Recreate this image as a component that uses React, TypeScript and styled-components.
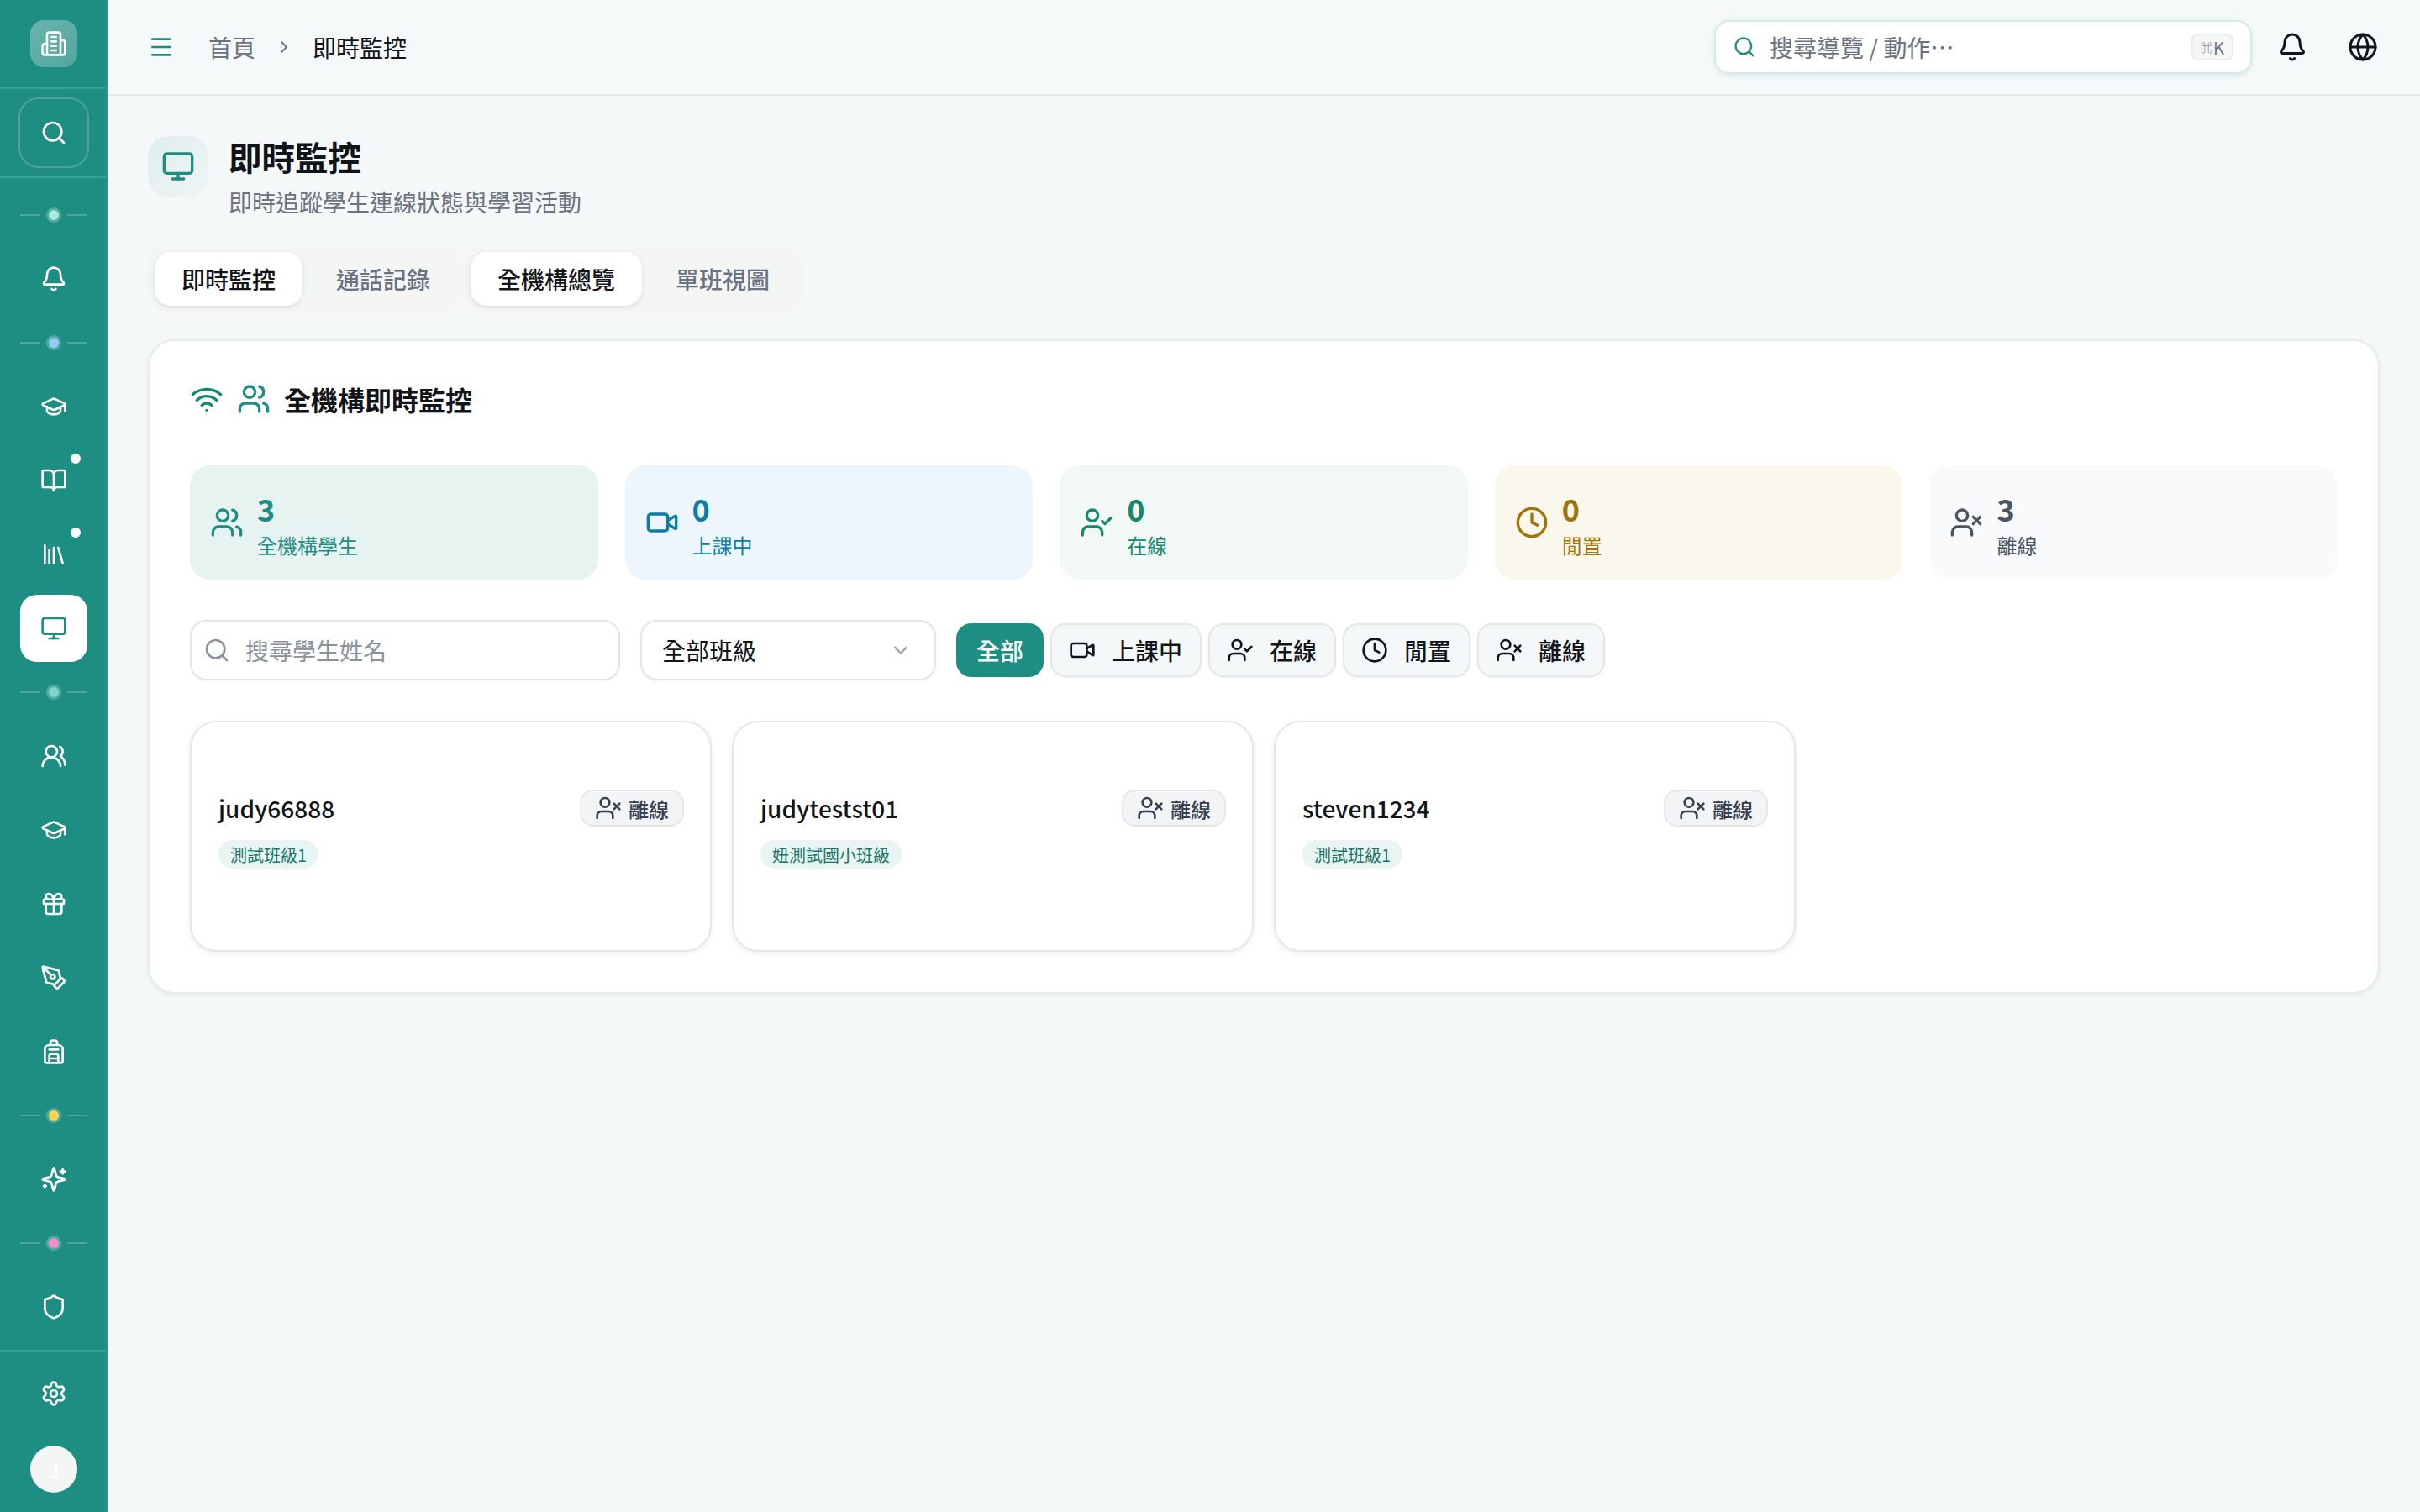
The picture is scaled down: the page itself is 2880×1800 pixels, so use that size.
import React from "react";
import styled, { createGlobalStyle } from "styled-components";
import {
  Backpack, Bell, BookOpen, ChevronDown, ChevronRight, Clock, Gift, Globe, GraduationCap,
  Library, Menu, Monitor, PenTool, Search, Settings, Shield, UserCheck, UserX, Users, UsersRound,
  Video, Wifi,
} from "lucide-react";

const GlobalStyle = createGlobalStyle`
  html, body { margin: 0; padding: 0; }
  body {
    background: #f5f8f8;
    color: #111418;
    font-family: "Noto Sans CJK TC", "Noto Sans", sans-serif;
  }
  * { box-sizing: border-box; }
`;

const Shell = styled.div`
  display: flex;
  min-height: 1800px;
`;

const Sidebar = styled.aside`
  position: relative;
  width: 128px;
  height: 1800px;
  flex: none;
  display: flex;
  flex-direction: column;
  background: #1f8e82;
  color: #fff;
  &::after {
    content: "";
    position: absolute;
    top: 0;
    right: 0;
    bottom: 0;
    width: 2px;
    background: #2b9489;
  }
`;

const LogoSection = styled.div`
  height: 106px;
  padding-top: 24px;
  display: flex;
  justify-content: center;
  align-items: flex-start;
  border-bottom: 2px solid rgba(255, 255, 255, 0.14);
`;

const LogoBox = styled.div`
  width: 56px;
  height: 56px;
  border-radius: 16px;
  display: flex;
  align-items: center;
  justify-content: center;
  background: linear-gradient(135deg, rgba(255, 255, 255, 0.34), rgba(255, 255, 255, 0.22));
`;

const SearchSection = styled.div`
  height: 106px;
  display: flex;
  align-items: center;
  justify-content: center;
  border-bottom: 2px solid rgba(255, 255, 255, 0.14);
`;

const SearchButton = styled.div`
  width: 84px;
  height: 84px;
  border-radius: 24px;
  border: 2px solid rgba(255, 255, 255, 0.2);
  display: flex;
  align-items: center;
  justify-content: center;
`;

const Nav = styled.nav`
  flex: 1;
  padding: 16px 24px 0;
  display: flex;
  flex-direction: column;
  gap: 8px;
`;

const NavItem = styled.div<{ $active?: boolean }>`
  position: relative;
  width: 80px;
  height: 80px;
  flex: none;
  border-radius: 20px;
  display: flex;
  align-items: center;
  justify-content: center;
  background: ${(p) => (p.$active ? "#fff" : "transparent")};
  color: ${(p) => (p.$active ? "#1f8e82" : "#fff")};
`;

const NavBadge = styled.span`
  position: absolute;
  top: 8px;
  right: 8px;
  width: 12px;
  height: 12px;
  border-radius: 50%;
  background: #fff;
`;

const Separator = styled.div`
  height: 56px;
  width: 80px;
  flex: none;
  display: flex;
  align-items: center;
  justify-content: center;
  gap: 8px;
`;

const SeparatorLine = styled.span`
  width: 24px;
  height: 2px;
  background: rgba(255, 255, 255, 0.22);
`;

const SeparatorDot = styled.span<{ $color: string }>`
  width: 12px;
  height: 12px;
  margin: 0 2px;
  border-radius: 50%;
  background: ${(p) => p.$color};
  box-shadow: 0 0 0 3px rgba(255, 255, 255, 0.24);
`;

const SidebarFooter = styled.div`
  height: 193px;
  border-top: 2px solid rgba(255, 255, 255, 0.14);
  padding-top: 10px;
  display: flex;
  flex-direction: column;
  align-items: center;
`;

const FooterButton = styled.div`
  width: 80px;
  height: 80px;
  display: flex;
  align-items: center;
  justify-content: center;
`;

const Avatar = styled.div`
  width: 56px;
  height: 56px;
  margin-top: 22px;
  border-radius: 50%;
  background: #f4f5f5;
  color: #fff;
  font-size: 24px;
  display: flex;
  align-items: center;
  justify-content: center;
`;

const Main = styled.div`
  flex: 1;
  min-width: 0;
  display: flex;
  flex-direction: column;
`;

const Header = styled.header`
  height: 114px;
  flex: none;
  padding: 0 48px;
  display: flex;
  align-items: center;
  background: #f5f9f9;
  border-bottom: 2px solid #e4eaea;
`;

const MenuButton = styled.div`
  width: 32px;
  height: 32px;
  margin-right: 40px;
  color: #1f8e82;
  display: flex;
`;

const Crumbs = styled.div`
  display: flex;
  align-items: center;
  gap: 22px;
  font-size: 28px;
  flex: 1;
`;

const CrumbLink = styled.span`
  color: #6b7280;
`;

const CrumbSeparator = styled.span`
  display: flex;
  color: #6b7280;
`;

const CrumbCurrent = styled.span`
  color: #111418;
`;

const HeaderSearch = styled.div`
  width: 640px;
  height: 64px;
  padding: 0 20px;
  margin-right: 28px;
  display: flex;
  align-items: center;
  gap: 16px;
  border-radius: 18px;
  border: 2px solid #d5ebe6;
  background: #fff;
  box-shadow: 0 2px 6px rgba(31, 142, 130, 0.14);
  color: #1f8e82;
`;

const HeaderSearchText = styled.span`
  flex: 1;
  font-size: 28px;
  color: #6b7280;
`;

const Kbd = styled.span`
  width: 50px;
  height: 32px;
  border-radius: 8px;
  border: 2px solid #e8ecec;
  background: #f5f7f7;
  color: #6b7280;
  font-size: 20px;
  display: flex;
  align-items: center;
  justify-content: center;
`;

const KbdSymbol = styled.span`
  font-size: 14px;
  margin-right: 1px;
`;

const HeaderIcon = styled.div`
  width: 40px;
  height: 40px;
  color: #111418;
  display: flex;
  align-items: center;
  justify-content: center;
  & + & { margin-left: 44px; }
`;

const Content = styled.main`
  padding: 48px;
`;

const TitleRow = styled.div`
  display: flex;
  gap: 24px;
  margin-bottom: 32px;
`;

const TitleIcon = styled.div`
  width: 72px;
  height: 72px;
  border-radius: 24px;
  background: linear-gradient(135deg, #deeeec, #eff5f5);
  color: #1f8e82;
  display: flex;
  align-items: center;
  justify-content: center;
`;

const PageTitle = styled.h1`
  margin: 0 0 10px;
  font-size: 39.5px;
  line-height: 48px;
  font-weight: 700;
  color: #111418;
`;

const PageSubtitle = styled.p`
  margin: 0;
  font-size: 28px;
  line-height: 40px;
  color: #6b7280;
`;

const TabsRow = styled.div`
  display: flex;
  margin-bottom: 32px;
`;

const TabList = styled.div`
  display: flex;
  gap: 8px;
  padding: 8px;
  border-radius: 24px;
  background: #f4f6f6;
`;

const Tab = styled.div<{ $active?: boolean }>`
  height: 64px;
  padding: 0 32px;
  border-radius: 20px;
  display: flex;
  align-items: center;
  font-size: 28px;
  font-weight: 500;
  color: ${(p) => (p.$active ? "#111418" : "#6b7280")};
  background: ${(p) => (p.$active ? "#fff" : "transparent")};
  box-shadow: ${(p) => (p.$active ? "0 2px 6px rgba(0, 0, 0, 0.1)" : "none")};
`;

const Panel = styled.section`
  padding: 48px;
  border-radius: 32px;
  border: 2px solid #e8eaeb;
  background: #fff;
  box-shadow: 0 2px 6px rgba(0, 0, 0, 0.06);
`;

const PanelHeader = styled.div`
  height: 41px;
  margin-bottom: 59px;
  display: flex;
  align-items: center;
`;

const WifiIcon = styled.span`
  display: flex;
  color: #15896b;
  margin-right: 16px;
`;

const PanelUsersIcon = styled.span`
  display: flex;
  color: #1f8e82;
  margin-right: 16px;
`;

const PanelTitle = styled.h2`
  margin: 0;
  font-size: 32px;
  font-weight: 700;
  color: #111418;
`;

const StatsGrid = styled.div`
  display: grid;
  grid-template-columns: repeat(5, 1fr);
  gap: 32px;
  margin-bottom: 48px;
`;

const StatCard = styled.div<{ $bg: string; $color: string }>`
  height: 136px;
  padding: 0 24px;
  border-radius: 24px;
  display: flex;
  align-items: center;
  gap: 16px;
  background: ${(p) => p.$bg};
  color: ${(p) => p.$color};
`;

const StatNumber = styled.div`
  font-size: 36px;
  font-weight: 600;
`;

const StatLabel = styled.div`
  font-size: 24px;
`;

const FilterRow = styled.div`
  display: flex;
  align-items: center;
  margin-bottom: 48px;
`;

const FilterSearch = styled.div`
  width: 512px;
  height: 72px;
  margin-right: 24px;
  padding: 0 14px;
  display: flex;
  align-items: center;
  gap: 18px;
  border-radius: 20px;
  border: 2px solid #e3e5e8;
  background: #fff;
  box-shadow: 0 1px 3px rgba(0, 0, 0, 0.05);
  color: #8b929c;
  font-size: 28px;
`;

const ClassSelect = styled.div`
  width: 352px;
  height: 72px;
  margin-right: 24px;
  padding: 0 26px 0 24px;
  display: flex;
  align-items: center;
  justify-content: space-between;
  border-radius: 20px;
  border: 2px solid #e3e5e8;
  background: #fff;
  box-shadow: 0 1px 3px rgba(0, 0, 0, 0.05);
  font-size: 28px;
  color: #111418;
`;

const SelectChevron = styled.span`
  display: flex;
  color: #9ca3af;
`;

const FilterGroup = styled.div`
  display: flex;
  gap: 8px;
`;

const FilterButton = styled.div<{ $active?: boolean; $hasIcon?: boolean }>`
  height: 64px;
  padding: 0 ${(p) => (p.$hasIcon ? "21px" : "22px")} 0 ${(p) => (p.$hasIcon ? "20px" : "22px")};
  display: flex;
  align-items: center;
  gap: 19px;
  border-radius: 18px;
  font-size: 28px;
  font-weight: 500;
  border: 2px solid ${(p) => (p.$active ? "#1f8e82" : "#e4e7e9")};
  background: ${(p) => (p.$active ? "#1f8e82" : "#f5f8f8")};
  color: ${(p) => (p.$active ? "#fff" : "#111418")};
  box-shadow: 0 1px 3px rgba(0, 0, 0, 0.05);
`;

const StudentGrid = styled.div`
  display: grid;
  grid-template-columns: repeat(4, 1fr);
  gap: 24px;
`;

const StudentCard = styled.article`
  height: 275px;
  padding: 80px 31px 0 32px;
  border-radius: 32px;
  border: 2px solid #e5e7eb;
  background: #fff;
  box-shadow: 0 2px 6px rgba(0, 0, 0, 0.08);
`;

const StudentRow = styled.div`
  height: 44px;
  margin-bottom: 16px;
  display: flex;
  align-items: center;
  justify-content: space-between;
`;

const StudentName = styled.span`
  font-size: 28px;
  font-weight: 500;
  color: #111418;
`;

const StatusBadge = styled.span`
  height: 44px;
  padding: 0 16px;
  display: flex;
  align-items: center;
  gap: 8px;
  border-radius: 16px;
  border: 2px solid #e5e7eb;
  background: #f3f4f6;
  color: #374151;
  font-size: 24px;
  font-weight: 500;
`;

const ClassTag = styled.span`
  display: inline-flex;
  align-items: center;
  height: 34px;
  padding: 0 14px;
  border-radius: 17px;
  background: #e8f5f2;
  color: #1a7566;
  font-size: 20px;
`;

const LineIcon = styled.svg`
  fill: none;
  stroke: currentColor;
  stroke-width: 2;
  stroke-linecap: round;
  stroke-linejoin: round;
`;

const BuildingLogo = () => (
  <LineIcon width={32} height={32} viewBox="0 0 24 24">
    <path d="M6 22V4a2 2 0 0 1 2-2h8a2 2 0 0 1 2 2v18Z" />
    <path d="M6 12H4a2 2 0 0 0-2 2v6a2 2 0 0 0 2 2h2" />
    <path d="M18 9h2a2 2 0 0 1 2 2v9a2 2 0 0 1-2 2h-2" />
    <path d="M10 6h4" />
    <path d="M10 10h4" />
    <path d="M10 14h4" />
    <path d="M10 18h4" />
  </LineIcon>
);

const SparklesIcon = () => (
  <LineIcon width={32} height={32} viewBox="0 0 24 24">
    <path d="M9.937 15.5A2 2 0 0 0 8.5 14.063l-6.135-1.582a.5.5 0 0 1 0-.962L8.5 9.936A2 2 0 0 0 9.937 8.5l1.582-6.135a.5.5 0 0 1 .963 0L14.063 8.5A2 2 0 0 0 15.5 9.937l6.135 1.581a.5.5 0 0 1 0 .964L15.5 14.063a2 2 0 0 0-1.437 1.437l-1.582 6.135a.5.5 0 0 1-.963 0z" />
    <path d="M20 3v4" />
    <path d="M22 5h-4" />
    <path d="M4 17v2" />
    <path d="M5 18H3" />
  </LineIcon>
);

type NavEntry =
  | { kind: "item"; icon: React.ReactNode; badge?: boolean; active?: boolean }
  | { kind: "sep"; color: string };

const navEntries: NavEntry[] = [
  { kind: "sep", color: "#a7ebdc" },
  { kind: "item", icon: <Bell size={32} /> },
  { kind: "sep", color: "#93cdf8" },
  { kind: "item", icon: <GraduationCap size={32} /> },
  { kind: "item", icon: <BookOpen size={32} />, badge: true },
  { kind: "item", icon: <Library size={32} />, badge: true },
  { kind: "item", icon: <Monitor size={32} />, active: true },
  { kind: "sep", color: "#7fd4c6" },
  { kind: "item", icon: <UsersRound size={32} /> },
  { kind: "item", icon: <GraduationCap size={32} /> },
  { kind: "item", icon: <Gift size={32} /> },
  { kind: "item", icon: <PenTool size={32} /> },
  { kind: "item", icon: <Backpack size={32} /> },
  { kind: "sep", color: "#fcd34d" },
  { kind: "item", icon: <SparklesIcon /> },
  { kind: "sep", color: "#f48cc8" },
  { kind: "item", icon: <Shield size={32} /> },
];

const stats = [
  { icon: <Users size={40} />, value: "3", label: "全機構學生", bg: "#e7f3f1", color: "#1f8e82" },
  { icon: <Video size={40} />, value: "0", label: "上課中", bg: "#eef6fd", color: "#0a7ea8" },
  { icon: <UserCheck size={40} />, value: "0", label: "在線", bg: "#f1f8f5", color: "#15896b" },
  { icon: <Clock size={40} />, value: "0", label: "閒置", bg: "#faf7ed", color: "#a37308" },
  { icon: <UserX size={40} />, value: "3", label: "離線", bg: "#f8fafb", color: "#4b5563" },
];

const filters = [
  { label: "全部", active: true },
  { label: "上課中", icon: <Video size={32} /> },
  { label: "在線", icon: <UserCheck size={32} /> },
  { label: "閒置", icon: <Clock size={32} /> },
  { label: "離線", icon: <UserX size={32} /> },
];

const students = [
  { name: "judy66888", group: "測試班級1" },
  { name: "judytestst01", group: "妞測試國小班級" },
  { name: "steven1234", group: "測試班級1" },
];

export default function App() {
  return (
    <>
      <GlobalStyle />
      <Shell>
        <Sidebar>
          <LogoSection>
            <LogoBox>
              <BuildingLogo />
            </LogoBox>
          </LogoSection>
          <SearchSection>
            <SearchButton>
              <Search size={32} />
            </SearchButton>
          </SearchSection>
          <Nav>
            {navEntries.map((entry, i) =>
              entry.kind === "sep" ? (
                <Separator key={i}>
                  <SeparatorLine />
                  <SeparatorDot $color={entry.color} />
                  <SeparatorLine />
                </Separator>
              ) : (
                <NavItem key={i} $active={entry.active}>
                  {entry.icon}
                  {entry.badge && <NavBadge />}
                </NavItem>
              )
            )}
          </Nav>
          <SidebarFooter>
            <FooterButton>
              <Settings size={32} />
            </FooterButton>
            <Avatar>J</Avatar>
          </SidebarFooter>
        </Sidebar>
        <Main>
          <Header>
            <MenuButton>
              <Menu size={32} />
            </MenuButton>
            <Crumbs>
              <CrumbLink>首頁</CrumbLink>
              <CrumbSeparator>
                <ChevronRight size={24} />
              </CrumbSeparator>
              <CrumbCurrent>即時監控</CrumbCurrent>
            </Crumbs>
            <HeaderSearch>
              <Search size={28} />
              <HeaderSearchText>搜尋導覽 / 動作⋯</HeaderSearchText>
              <Kbd>
                <KbdSymbol>⌘</KbdSymbol>K
              </Kbd>
            </HeaderSearch>
            <HeaderIcon>
              <Bell size={36} />
            </HeaderIcon>
            <HeaderIcon>
              <Globe size={36} />
            </HeaderIcon>
          </Header>
          <Content>
            <TitleRow>
              <TitleIcon>
                <Monitor size={40} />
              </TitleIcon>
              <div>
                <PageTitle>即時監控</PageTitle>
                <PageSubtitle>即時追蹤學生連線狀態與學習活動</PageSubtitle>
              </div>
            </TitleRow>
            <TabsRow>
              <TabList>
                <Tab $active>即時監控</Tab>
                <Tab>通話記錄</Tab>
              </TabList>
              <TabList>
                <Tab $active>全機構總覽</Tab>
                <Tab>單班視圖</Tab>
              </TabList>
            </TabsRow>
            <Panel>
              <PanelHeader>
                <WifiIcon>
                  <Wifi size={40} />
                </WifiIcon>
                <PanelUsersIcon>
                  <Users size={40} />
                </PanelUsersIcon>
                <PanelTitle>全機構即時監控</PanelTitle>
              </PanelHeader>
              <StatsGrid>
                {stats.map((s) => (
                  <StatCard key={s.label} $bg={s.bg} $color={s.color}>
                    {s.icon}
                    <div>
                      <StatNumber>{s.value}</StatNumber>
                      <StatLabel>{s.label}</StatLabel>
                    </div>
                  </StatCard>
                ))}
              </StatsGrid>
              <FilterRow>
                <FilterSearch>
                  <Search size={32} />
                  搜尋學生姓名
                </FilterSearch>
                <ClassSelect>
                  全部班級
                  <SelectChevron>
                    <ChevronDown size={28} />
                  </SelectChevron>
                </ClassSelect>
                <FilterGroup>
                  {filters.map((f) => (
                    <FilterButton key={f.label} $active={f.active} $hasIcon={!!f.icon}>
                      {f.icon}
                      {f.label}
                    </FilterButton>
                  ))}
                </FilterGroup>
              </FilterRow>
              <StudentGrid>
                {students.map((s) => (
                  <StudentCard key={s.name}>
                    <StudentRow>
                      <StudentName>{s.name}</StudentName>
                      <StatusBadge>
                        <UserX size={32} />
                        離線
                      </StatusBadge>
                    </StudentRow>
                    <ClassTag>{s.group}</ClassTag>
                  </StudentCard>
                ))}
              </StudentGrid>
            </Panel>
          </Content>
        </Main>
      </Shell>
    </>
  );
}
